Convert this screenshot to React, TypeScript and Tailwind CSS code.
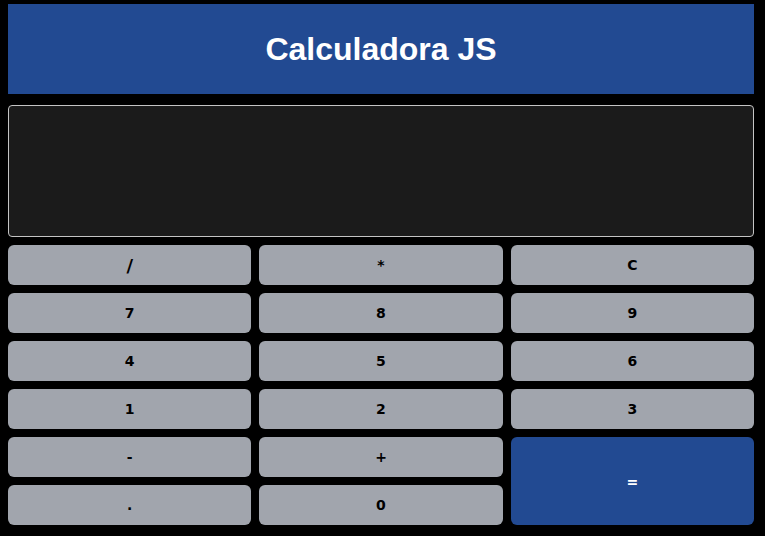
const keys: { label: string; className?: string }[] = [
  { label: "/", className: "bg-[#a1a5ad] text-black text-[18px]" },
  { label: "*" },
  { label: "C" },
  { label: "7" },
  { label: "8" },
  { label: "9" },
  { label: "4" },
  { label: "5" },
  { label: "6" },
  { label: "1" },
  { label: "2" },
  { label: "3" },
  { label: "-" },
  { label: "+" },
  { label: "=", className: "row-span-2 bg-[#224a92] text-white pt-[2px]" },
  { label: "." },
  { label: "0" },
];

export default function App() {
  return (
    <div className="min-h-[536px] w-[765px] bg-black pt-1 pl-2">
      <div className="w-[746px]">
        <header className="flex h-[90px] items-center justify-center bg-[#224a92]">
          <h1 className="font-['Liberation_Sans',Arial,sans-serif] text-[32px] font-bold text-white">
            Calculadora JS
          </h1>
        </header>

        <div className="mt-[11px] h-[132px] rounded border border-[#c4c4c4] bg-[#1b1b1b]" />

        <div className="mt-2 grid grid-cols-3 auto-rows-[40px] gap-2 font-['DejaVu_Sans',sans-serif] text-[14px] font-bold">
          {keys.map((k) => (
            <button
              key={k.label}
              className={
                "flex items-center justify-center rounded-md " +
                (k.className ?? "bg-[#a1a5ad] text-black")
              }
            >
              {k.label}
            </button>
          ))}
        </div>
      </div>
    </div>
  );
}
